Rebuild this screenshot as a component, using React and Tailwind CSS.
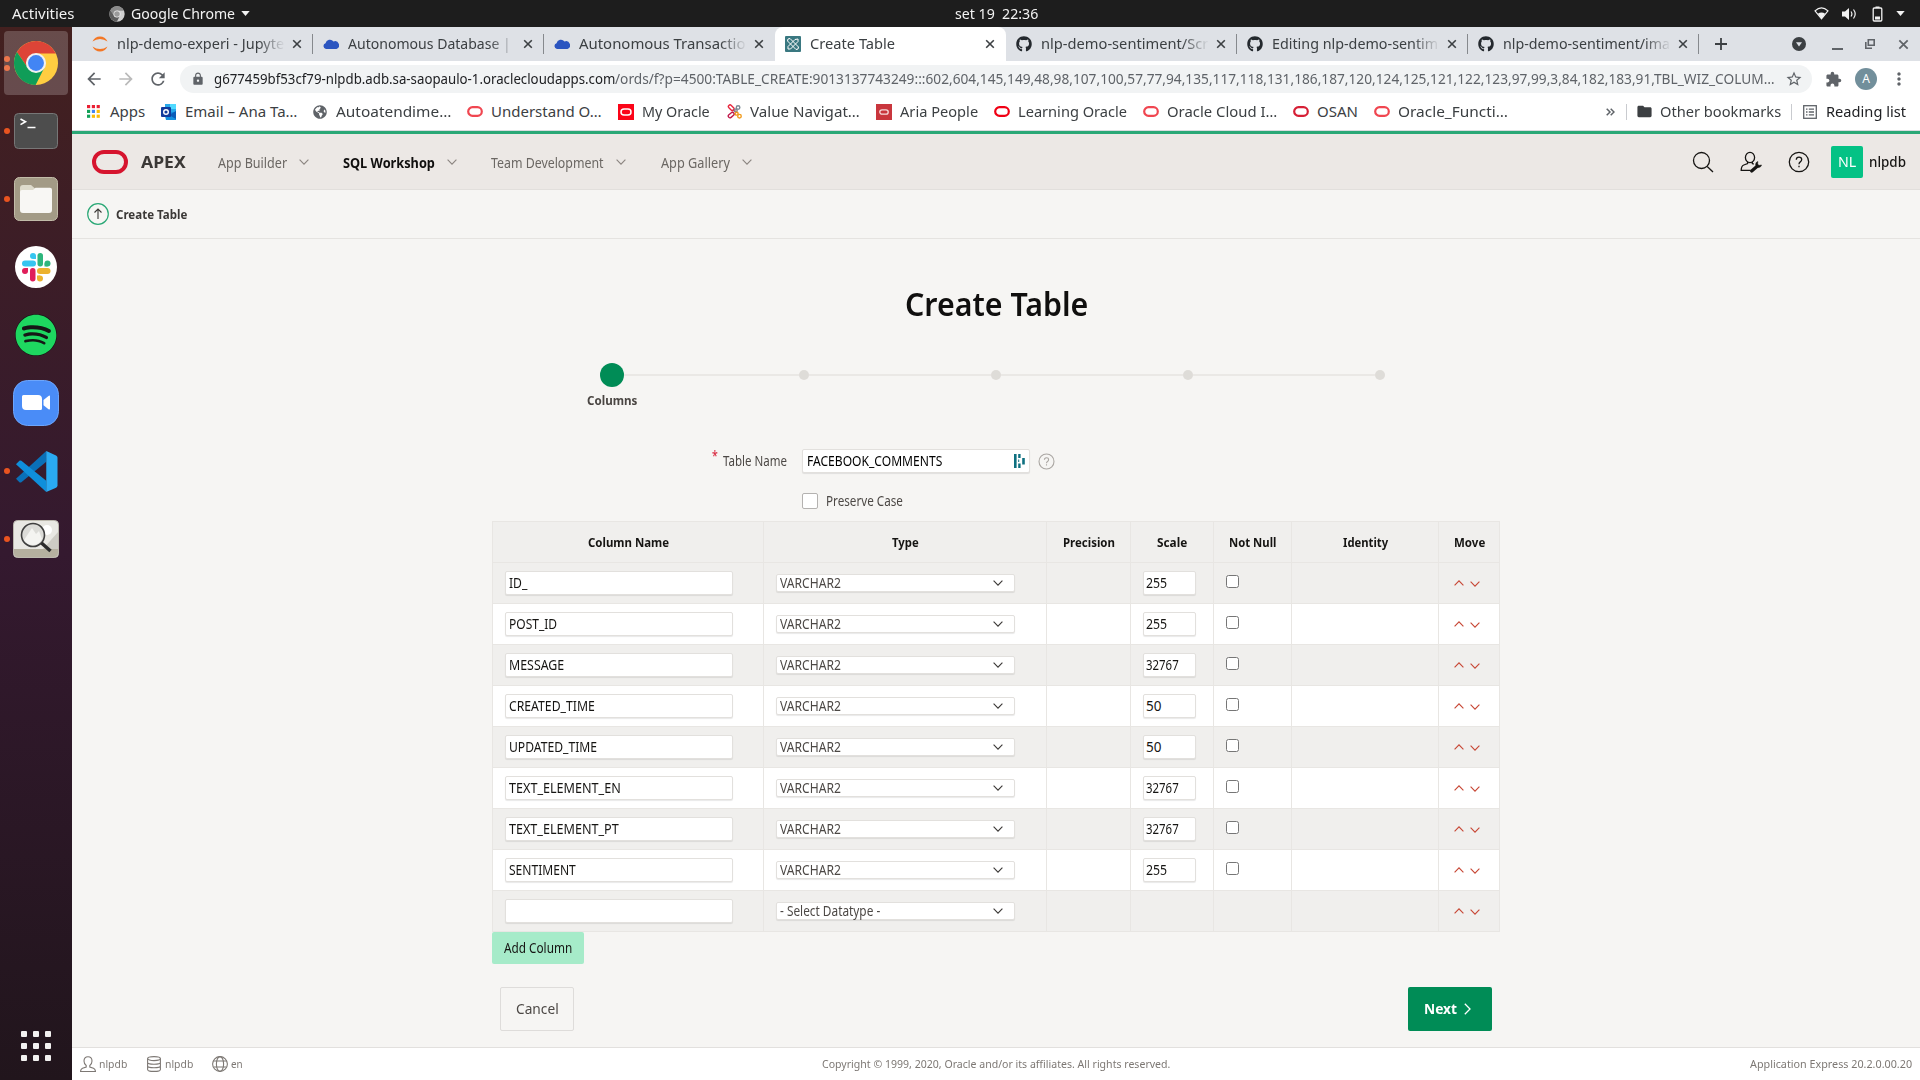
import React, { useLayoutEffect, useRef } from "react";
import { FaGithub, FaSpotify } from "react-icons/fa";
import { MdStarBorder, MdExtension, MdLock, MdRefresh, MdArrowBack, MdArrowForward, MdMoreVert, MdFolder } from "react-icons/md";
import { FaGlobeAmericas } from "react-icons/fa";

// Single line of text, condensed or widened so that it fills `w` pixels.
function Fit({ w, className = "", children }) {
  const outer = useRef(null);
  const inner = useRef(null);
  useLayoutEffect(() => {
    outer.current.style.width = w + "px";
    inner.current.style.transform = `scaleX(${w / inner.current.offsetWidth})`;
  });
  return (
    <span ref={outer} className={"inline-block shrink-0 text-left whitespace-pre " + className}>
      <span ref={inner} className="inline-block origin-left">{children}</span>
    </span>
  );
}

function ChromeLogo({ className, gray }) {
  const c = gray ? ["#8a8a8a", "#5c5c5c", "#d0d0d0", "#9a9a9a", "#eeeeee"] : ["#dd4437", "#109d58", "#ffcd41", "#4285f4", "#f1f1f1"];
  return (
    <svg viewBox="0 0 48 48" className={className}>
      <circle cx="24" cy="24" r="23" fill={c[2]} />
      <path d="M24 14h20.7A23 23 0 0 0 4.1 12.5L15.3 29z" fill={c[0]} />
      <path d="M4.1 12.5A23 23 0 0 0 23.6 47L32.7 29 24 34 15.3 29z" fill={c[1]} />
      <circle cx="24" cy="24" r="10.5" fill={c[4]} />
      <circle cx="24" cy="24" r="8.3" fill={c[3]} />
    </svg>
  );
}

function TopBar() {
  return (
    <div className="grid h-[27px] grid-cols-3 items-center bg-[#1d1d1d] text-[14.5px] text-[#f2f2f2]">
      <div className="flex items-center pl-3">
        <Fit w={62}>Activities</Fit>
        <ChromeLogo gray className="ml-[35px] size-4" />
        <Fit w={104} className="ml-[6px]">Google Chrome</Fit>
        <svg viewBox="0 0 10 6" className="ml-[6px] h-[5px] w-[9px]"><path d="M0 0h10L5 6z" fill="#f2f2f2" /></svg>
      </div>
      <div className="flex justify-center pl-[73px]"><Fit w={83}>set 19  22:36</Fit></div>
      <div className="flex items-center justify-end pr-[15px]">
        <svg viewBox="0 0 16 14" className="h-[13px] w-[15px]">
          <path d="M1 4.2Q8-2.2 15 4.2L8 12.8z" fill="none" stroke="#f2f2f2" strokeWidth="1.3" />
          <path d="M4 7.2Q8 4.6 12 7.2L8 12.6z" fill="#f2f2f2" />
        </svg>
        <svg viewBox="0 0 16 14" className="ml-[12px] h-[14px] w-[16px]">
          <path d="M1 4.5h3L8 1v12L4 9.500H1z" fill="#f2f2f2" />
          <path d="M10 4.500q1.800 2.500 0 5M12.500 2.500q3.400 4.500 0 9" fill="none" stroke="#f2f2f2" strokeWidth="1.200" />
        </svg>
        <svg viewBox="0 0 11 16" className="ml-[15px] h-4 w-[11px]">
          <rect x="1.200" y="2" width="8.600" height="13" rx="1" fill="none" stroke="#f2f2f2" strokeWidth="1.300" />
          <path d="M3.500.5h4V2h-4zM3 10.500h5V13.500H3z" fill="#f2f2f2" />
        </svg>
        <svg viewBox="0 0 10 6" className="ml-[13px] h-[5px] w-[9px]"><path d="M0 0h10L5 6z" fill="#f2f2f2" /></svg>
      </div>
    </div>
  );
}

const dockIcons = [
  { dots: 2, active: true, icon: <ChromeLogo className="size-[46px]" /> },
  {
    dots: 1,
    icon: (
      <svg viewBox="0 0 44 36" className="h-9 w-11">
        <rect x=".5" y=".5" width="43" height="35" rx="4" fill="#4d4d4d" stroke="#777" />
        <path d="M6.500 6l5 2.800-5 2.800M13.500 14.500h8" fill="none" stroke="#fff" strokeWidth="1.600" />
      </svg>
    ),
  },
  {
    dots: 1,
    icon: (
      <svg viewBox="0 0 44 44" className="size-11">
        <rect x=".5" y=".5" width="43" height="43" rx="5" fill="#a39b86" stroke="#c2bca9" />
        <path d="M6 11a3 3 0 0 1 3-3h8l4 3.500v6H6z" fill="#dedbcc" />
        <path d="M6 15q0-2 2-2h11l2.500-2.300H36q2 0 2 2V33q0 3-3 3H9q-3 0-3-3z" fill="#f8f7f4" />
      </svg>
    ),
  },
  {
    dots: 0,
    icon: (
      <svg viewBox="0 0 42 42" className="size-[42px]">
        <circle cx="21" cy="21" r="21" fill="#fff" />
        <g transform="translate(7 7)">
          <rect x="8" y="0" width="6" height="6" rx="3" fill="#36c5f0" />
          <path d="M11 3h3v3h-3z" fill="#36c5f0" />
          <rect x="0" y="7.500" width="14" height="6" rx="3" fill="#36c5f0" />
          <rect x="15.500" y="0" width="5.500" height="13.500" rx="2.700" fill="#2eb67d" />
          <rect x="22.500" y="7.500" width="6" height="6" rx="3" fill="#2eb67d" />
          <path d="M22.500 10.500h3v3h-3z" fill="#2eb67d" />
          <rect x="15" y="15" width="13.500" height="6" rx="3" fill="#ecb22e" />
          <rect x="15" y="22.500" width="6" height="6" rx="3" fill="#ecb22e" />
          <path d="M15 22.500h3v3h-3z" fill="#ecb22e" />
          <rect x="8" y="15" width="5.500" height="13.500" rx="2.700" fill="#e01e5a" />
          <rect x="0" y="15" width="6" height="6" rx="3" fill="#e01e5a" />
          <path d="M3 15h3v3H3z" fill="#e01e5a" />
        </g>
      </svg>
    ),
  },
  {
    dots: 0,
    icon: (
      <span className="rounded-full bg-[#161616]">
        <FaSpotify className="size-[42px] text-[#1ed760]" />
      </span>
    ),
  },
  {
    dots: 0,
    icon: (
      <svg viewBox="0 0 46 46" className="size-[46px]">
        <rect x=".5" y=".5" width="45" height="45" rx="14" fill="#4a8cf7" stroke="#6da5fb" />
        <path d="M9 16.500q0-1.500 1.500-1.500H25q4 0 4 4v9.500q0 1.500-1.500 1.500H13q-4 0-4-4zM30.500 20l5-4q1.500-1 1.500 .6v12q0 1.600-1.500.6l-5-4z" fill="#fff" />
      </svg>
    ),
  },
  {
    dots: 1,
    icon: (
      <svg viewBox="0 0 44 44" className="size-[43px]">
        <path d="M1 29.500l3.500 3.500q1 .7 2 0L32 12V1z" fill="#0a70b8" />
        <path d="M1 14.500L4.500 11q1-.7 2 0L32 31.500V43z" fill="#0f8fdb" />
        <path d="M32 1l10 4.500q1.500.7 1.500 2.500v28q0 1.800-1.500 2.500L32 43z" fill="#2aaaf2" />
      </svg>
    ),
  },
  {
    dots: 1,
    icon: (
      <svg viewBox="0 0 46 38" className="h-[38px] w-[46px]">
        <rect x=".5" y=".5" width="45" height="37" rx="4" fill="#e9e8e3" stroke="#bcb9ae" />
        <path d="M1 29h44v4q0 4-4 4H5q-4 0-4-4z" fill="#b5b09f" />
        <path d="M30 29L45 12v17z" fill="#cdcbc4" />
        <circle cx="34" cy="10" r="5" fill="#fff" />
        <circle cx="20" cy="15" r="11.500" fill="#dcdcd8" stroke="#3f3f3f" strokeWidth="1.600" />
        <path d="M11 20l8-12 4 6 3-3 3 8q-3 6-9 6-6 0-9-5z" fill="#f4f4f1" />
        <path d="M28.500 23l9 8" stroke="#2b2b2b" strokeWidth="3.500" />
      </svg>
    ),
  },
];

function Dock() {
  return (
    <aside className="flex w-[72px] shrink-0 flex-col bg-gradient-to-b from-[#43201f] via-[#34192f] to-[#21151c] pt-[2px]">
      {dockIcons.map((d, i) => (
        <div key={i} className="flex h-[68px] items-center">
          <div className="flex w-[14px] shrink-0 flex-col gap-[3px] pl-1">
            {Array.from({ length: d.dots }).map((_, k) => <i key={k} className="size-[6px] rounded-full bg-[#e95420]" />)}
          </div>
          <div className={d.active ? "-ml-[10px] flex size-16 items-center justify-center rounded bg-white/20" : "-ml-[10px] flex size-16 items-center justify-center"}>{d.icon}</div>
        </div>
      ))}
      <div className="mt-auto mb-[19px] ml-[21px] grid w-[30px] grid-cols-3 gap-[6px]">
        {Array.from({ length: 9 }).map((_, k) => <i key={k} className="size-[6px] rounded-[1px] bg-[#f2f1f0]" />)}
      </div>
    </aside>
  );
}

const Jupyter = () => (
  <svg viewBox="0 0 16 18" className="h-[18px] w-4" fill="#f37726">
    <path d="M.5 6.500Q3 1.500 8 1.500t7.500 5Q12 4 8 4T.5 6.500zM.5 11.500Q3 16.500 8 16.500t7.500-5Q12 14 8 14T.5 11.500z" />
  </svg>
);
const Cloud = () => (
  <svg viewBox="0 0 16 10" className="h-[10px] w-4 text-[#2b55c0]" fill="currentColor">
    <path d="M3 10A3 3 0 0 1 2.500 4.200 4.500 4.500 0 0 1 10.500 2.500 3.800 3.800 0 0 1 13.500 10z" />
  </svg>
);
const ApexFav = () => (
  <svg viewBox="0 0 16 16" className="size-4">
    <rect width="16" height="16" rx="1" fill="#3a7881" />
    <path d="M3 3l2-.5L13.500 11l-.5 2-2 .5L2.500 5zM13 3l-3 .5L3 10.500V13h2.500L13 5.500z" fill="none" stroke="#fff" strokeWidth="1" />
  </svg>
);

const tabs = [
  { t: "nlp-demo-experi - Jupyte", w: 167, icon: <Jupyter />, sep: true },
  { t: "Autonomous Database |", w: 163, icon: <Cloud />, sep: true },
  { t: "Autonomous Transactio", w: 166, icon: <Cloud /> },
  { t: "Create Table", w: 85, icon: <ApexFav />, active: true },
  { t: "nlp-demo-sentiment/Scr", w: 167, icon: <FaGithub className="size-4 text-[#24292e]" />, sep: true },
  { t: "Editing nlp-demo-sentim", w: 166, icon: <FaGithub className="size-4 text-[#24292e]" />, sep: true },
  { t: "nlp-demo-sentiment/ima", w: 167, icon: <FaGithub className="size-4 text-[#24292e]" />, sep: true },
];

const X = ({ className }) => (
  <svg viewBox="0 0 10 10" className={className}><path d="M1.200 1.200l7.600 7.600M8.800 1.200L1.200 8.800" stroke="currentColor" strokeWidth="1.600" /></svg>
);

function Tab({ tab }) {
  return (
    <div className={tab.active ? "relative flex h-[34px] w-[231px] items-center rounded-t-lg bg-white" : "relative flex h-[34px] w-[231px] items-center"}>
      <span className="ml-[10px] flex w-4 justify-center">{tab.icon}</span>
      <div className={tab.active ? "ml-[9px] w-[168px] pb-[2px] text-[#3c4043]" : "ml-[9px] w-[168px] pb-[2px] text-[#3c4043] [mask-image:linear-gradient(to_right,black_84%,transparent)]"}>
        <Fit w={tab.w}>{tab.t}</Fit>
      </div>
      <X className="ml-[7px] size-[10px] text-[#3c4043]" />
      {tab.sep && <i className="absolute top-[7px] right-0 h-5 w-px bg-[#86898d]" />}
    </div>
  );
}

function TabStrip() {
  return (
    <div className="flex h-[34px] items-center bg-[#dee1e6] pl-[10px] text-[15px]">
      {tabs.map((t) => <Tab key={t.t} tab={t} />)}
      <svg viewBox="0 0 12 12" className="ml-[16px] size-3"><path d="M6 0v12M0 6h12" stroke="#3c4043" strokeWidth="1.800" /></svg>
      <svg viewBox="0 0 14 14" className="ml-[65px] size-[14px]"><circle cx="7" cy="7" r="7" fill="#3c4043" /><path d="M4 5.300h6L7 9.500z" fill="#dee1e6" /></svg>
      <i className="mt-[9px] ml-[26px] h-[2px] w-[11px] bg-[#5f6368]" />
      <svg viewBox="0 0 10 10" className="ml-[22px] size-[10px]" fill="none" stroke="#5f6368" strokeWidth="1.600"><path d="M3.300.8h5.900v5.400H3.300zM.8 3v6.200H7" /></svg>
      <X className="ml-[23px] size-[11px] text-[#5f6368]" />
    </div>
  );
}

function Toolbar() {
  return (
    <div className="flex h-9 items-center bg-white">
      <MdArrowBack className="ml-[12px] size-5 text-[#5f6368]" />
      <MdArrowForward className="ml-3 size-5 text-[#bababa]" />
      <MdRefresh className="ml-3 size-5 text-[#5f6368]" />
      <div className="ml-3 flex h-7 w-[1632px] items-center rounded-full bg-[#f1f3f4] pl-[11px] text-[14px]">
        <MdLock className="size-[14px] text-[#5f6368]" />
        <Fit w={401} className="ml-[9px] pb-px text-[#202124]">g677459bf53cf79-nlpdb.adb.sa-saopaulo-1.oraclecloudapps.com</Fit>
        <Fit w={1160} className="pb-px text-[#5f6368]">/ords/f?p=4500:TABLE_CREATE:9013137743249:::602,604,145,149,48,98,107,100,57,77,94,135,117,118,131,186,187,120,124,125,121,122,123,97,99,3,84,182,183,91,TBL_WIZ_COLUM…</Fit>
        <MdStarBorder className="ml-[10px] size-[18px] text-[#5f6368]" />
      </div>
      <MdExtension className="ml-[13px] size-[17px] text-[#5f6368]" />
      <span className="ml-[13px] flex size-[22px] items-center justify-center rounded-full bg-[#728f9b] text-[12px] text-white">A</span>
      <MdMoreVert className="ml-3 size-5 text-[#5f6368]" />
    </div>
  );
}

const OPill = ({ className = "text-[#f04650]" }) => (
  <svg viewBox="0 0 16 11" className={"h-[11px] w-4 " + className}><rect x="1.200" y="1.200" width="13.600" height="8.600" rx="4.300" fill="none" stroke="currentColor" strokeWidth="2.200" /></svg>
);
const OBox = ({ className }) => (
  <span className={"flex size-4 items-center justify-center text-white " + className}>
    <svg viewBox="0 0 12 8" className="h-[8px] w-3"><rect x="1" y="1" width="10" height="6" rx="3" fill="none" stroke="currentColor" strokeWidth="1.500" /></svg>
  </span>
);
// Darker variant with a smaller mark.
const OBoxSmall = () => (
  <span className="flex size-4 items-center justify-center bg-[#c9363d]">
    <svg viewBox="0 0 10 6" className="h-[6px] w-[10px]"><rect x=".8" y=".8" width="8.400" height="4.400" rx="2.200" fill="none" stroke="#f6dcdc" strokeWidth="1.300" /></svg>
  </span>
);
const AppsGrid = () => (
  <svg viewBox="0 0 14 14" className="h-[13px] w-[13px]">
    {["#ea1f33", "#ea1f33", "#ea1f33", "#12a158", "#4285f4", "#fbbc05", "#12a158", "#fbbc05", "#fbbc05"].map((c, i) => (
      <rect key={i} x={(i % 3) * 5.2} y={Math.floor(i / 3) * 5.2} width="3.400" height="3.400" fill={c} />
    ))}
  </svg>
);
const Outlook = () => (
  <svg viewBox="0 0 16 16" className="size-4">
    <path d="M4 0h11v10H4z" fill="#28a8ea" /><path d="M9 0h6v5H9z" fill="#50d9ff" /><path d="M3 8l12 0v8H5z" fill="#1490df" /><path d="M15 7v8l-7-4z" fill="#0a5cb8" />
    <rect y="3" width="10" height="10" rx="1" fill="#123b9c" /><circle cx="5" cy="8" r="2.300" fill="none" stroke="#fff" strokeWidth="1.400" />
  </svg>
);
const ValueNav = () => (
  <svg viewBox="0 0 16 16" className="size-[15px]" fill="none" strokeWidth="1.500">
    <path d="M11.500 9.500L6 6" stroke="#e0243a" strokeWidth="1.800" />
    <rect x="1" y="2.200" width="7" height="3.600" rx="1.800" transform="rotate(45 4.500 4)" stroke="#e8283f" />
    <circle cx="11.800" cy="3.800" r="1.900" stroke="#7c8a94" />
    <circle cx="9.300" cy="6.800" r="1.500" stroke="#7c8a94" />
    <rect x="1" y="10" width="7" height="3.600" rx="1.800" transform="rotate(-40 4.500 11.800)" stroke="#c01a4c" />
    <circle cx="10.300" cy="10.300" r="1.600" stroke="#f19c1f" />
    <circle cx="13.300" cy="13" r="1.900" stroke="#f19c1f" />
  </svg>
);

const bookmarks = [
  { t: "Apps", w: 35, icon: <AppsGrid />, m: "ml-[15px]", g: "ml-[10px]" },
  { t: "Email – Ana Ta…", w: 112, icon: <Outlook /> },
  { t: "Autoatendime…", w: 115, icon: <FaGlobeAmericas className="size-[14px] text-[#5f6368]" />, m: "ml-[16px]", g: "ml-[9px]" },
  { t: "Understand O…", w: 111, icon: <OPill />, m: "ml-[16px]" },
  { t: "My Oracle", w: 68, icon: <OBox className="bg-[#fb0418]" /> },
  { t: "Value Navigat…", w: 110, icon: <ValueNav />, m: "ml-[17px]" },
  { t: "Aria People", w: 78, icon: <OBoxSmall /> },
  { t: "Learning Oracle", w: 109, icon: <OPill className="text-[#f00014]" /> },
  { t: "Oracle Cloud I…", w: 110, icon: <OPill /> },
  { t: "OSAN", w: 41, icon: <OPill className="text-[#d61f35]" /> },
  { t: "Oracle_Functi…", w: 110, icon: <OPill /> },
];

function Bookmarks() {
  return (
    <div className="flex h-[34px] items-center border-b border-[#dadce0] bg-white pb-1 text-[15px] text-[#3c4043]">
      {bookmarks.map((b) => (
        <div key={b.t} className={"flex items-center " + (b.m || "ml-4")}>
          {b.icon}
          <Fit w={b.w} className={b.g || "ml-2"}>{b.t}</Fit>
        </div>
      ))}
      <div className="mr-[14px] ml-auto flex items-center">
        <svg viewBox="0 0 9 8" className="mr-[11px] h-2 w-[9px]" fill="none" stroke="#5f6368" strokeWidth="1.500"><path d="M.7.7L4 4 .7 7.300M4.700.7L8 4 4.700 7.300" /></svg>
        <i className="h-4 w-px bg-[#c9cbcf]" />
        <MdFolder className="ml-[9px] size-[17px] text-[#3c3f42]" />
        <Fit w={121} className="ml-[7px]">Other bookmarks</Fit>
        <i className="ml-[10px] h-4 w-px bg-[#c9cbcf]" />
        <svg viewBox="0 0 14 14" className="ml-[11px] size-[14px]" fill="none" stroke="#5f6368"><rect x=".7" y=".7" width="12.600" height="12.600" strokeWidth="1.300" /><path d="M3 4.200h1.500M3 7h1.500M3 9.800h1.500M5.800 4.200H11M5.800 7H11M5.800 9.800H11" strokeWidth="1.300" /></svg>
        <Fit w={80} className="ml-[9px] text-[#202124]">Reading list</Fit>
      </div>
    </div>
  );
}

const Chev = ({ d = "down", className }) => (
  <svg viewBox="0 0 10 6" className={className} fill="none" stroke="currentColor" strokeWidth="1.100">
    <path d={d === "down" ? "M.6.6L5 5.200 9.400.6" : "M.6 5.400L5 .8l4.400 4.600"} />
  </svg>
);

const nav = [
  { t: "App Builder", w: 69, m: "ml-8" },
  { t: "SQL Workshop", w: 92, m: "ml-[34px]", on: true },
  { t: "Team Development", w: 113, m: "ml-[34px]" },
  { t: "App Gallery", w: 69, m: "ml-[35px]" },
];

function ApexHeader() {
  return (
    <header className="flex h-[59px] items-center border-t-[3px] border-b border-t-[#2aa876] border-b-[#e2dfdc] bg-[#ece8e5]">
      <span className="ml-[20px] h-6 w-9 rounded-[12px] border-[4px] border-[#d6142e]" />
      <Fit w={45} className="ml-[13px] text-[16px] font-bold text-[#3b3836]">APEX</Fit>
      {nav.map((n) => (
        <div key={n.t} className={"flex items-center " + n.m}>
          <Fit w={n.w} className={n.on ? "pt-px text-[14px] font-bold text-[#100f0e]" : "pt-px text-[14px] text-[#6b6763]"}>{n.t}</Fit>
          <Chev className="ml-3 h-[6px] w-[10px] text-[#8b8580]" />
        </div>
      ))}
      <div className="mr-[14px] ml-auto flex items-center text-[#161513]">
        <svg viewBox="0 0 22 22" className="size-[22px]" fill="none" stroke="currentColor" strokeWidth="1.300"><circle cx="9.500" cy="9.500" r="8" /><path d="M15.200 15.500l5.800 5.500" /></svg>
        <svg viewBox="0 0 22 22" className="ml-[26px] size-[22px]" fill="none" stroke="currentColor" strokeWidth="1.300">
          <ellipse cx="10" cy="6.500" rx="4.600" ry="5.200" />
          <path d="M7.600 11v1.600L3.800 14Q1.300 15 1.200 19.300h9.300M12.300 11v1.600l1.500.6" />
          <path d="M11.700 20l5.500-4.800" strokeWidth="3.200" strokeLinecap="round" />
          <path d="M17.800 10.500q-2.300.8-2.200 3.300.5 2.800 3.200 2.700 2.200-.3 2.700-2.500l-2.600.5-1.300-1.500z" fill="currentColor" strokeWidth=".6" />
        </svg>
        <svg viewBox="0 0 22 22" className="ml-[26px] size-[22px]" fill="none" stroke="currentColor" strokeWidth="1.300"><circle cx="11" cy="11" r="9.700" /><path d="M8.300 8.800q0-2.700 2.700-2.700t2.700 2.500q0 1.400-1.400 2.300-1.300.8-1.300 2.300M11 14.700v1.500" /></svg>
        <span className="ml-[21px] flex size-8 items-center justify-center rounded-[2px] bg-[#04c285] text-white"><Fit w={18} className="text-[15px]">NL</Fit></span>
        <Fit w={37} className="ml-[6px] text-[14.500px] font-medium">nlpdb</Fit>
      </div>
    </header>
  );
}

function Steps() {
  return (
    <div className="mt-[41px] flex flex-col">
      <div className="ml-[108px] flex h-6 items-center self-start">
        <span className="size-6 rounded-full bg-[#008c56]" />
        <i className="h-[2px] w-[175px] bg-[#eae8e5]" />
        <span className="size-[10px] rounded-full bg-[#dedcd8]" />
        {[1, 2, 3].map((k) => (
          <React.Fragment key={k}>
            <i className="h-[2px] w-[182px] bg-[#eae8e5]" />
            <span className="size-[10px] rounded-full bg-[#dedcd8]" />
          </React.Fragment>
        ))}
      </div>
      <Fit w={50} className="mt-[4px] mb-px ml-[95px] self-start text-[13px] leading-[18px] font-bold text-[#4a4643]">Columns</Fit>
    </div>
  );
}

const box = "rounded-[2px] border border-[#e2e0dd] bg-white shadow-[0_1px_1px_rgba(0,0,0,0.09)]";

const rows = [
  ["ID_", 18, "255", 21],
  ["POST_ID", 48, "255", 21],
  ["MESSAGE", 55, "32767", 33],
  ["CREATED_TIME", 86, "50", 15],
  ["UPDATED_TIME", 88, "50", 15],
  ["TEXT_ELEMENT_EN", 112, "32767", 33],
  ["TEXT_ELEMENT_PT", 110, "32767", 33],
  ["SENTIMENT", 67, "255", 21],
  ["", 0, "", 0],
];
const heads = [["Column Name", 81], ["Type", 27], ["Precision", 52], ["Scale", 30], ["Not Null", 47], ["Identity", 45], ["Move", 31]];
const grid = "grid h-[41px] grid-cols-[271px_283px_84px_83px_78px_147px_61px] ";
const cell = "flex h-full items-center border-r border-b border-[#e8e6e3] ";

function ColumnsTable() {
  return (
    <div className="w-[1008px] border-t border-l border-[#e8e6e3] text-[13.500px] text-[#161513]">
      <div className={grid + "bg-[#f0efed]"}>
        {heads.map(([h, w]) => (
          <div key={h} className={cell + "justify-center"}><Fit w={w} className="pt-px text-[13px] font-bold">{h}</Fit></div>
        ))}
      </div>
      {rows.map(([name, w, scale, sw], i) => (
        <div key={i} className={grid + (i % 2 ? "bg-white" : "bg-[#f0efed]")}>
          <div className={cell + "pl-3"}>
            <div className={"flex h-6 w-[228px] items-center pl-[3px] " + box}>{name && <Fit w={w} className="pt-px">{name}</Fit>}</div>
          </div>
          <div className={cell + "pl-3"}>
            <div className={"flex h-[18px] w-[239px] items-center justify-between pr-[11px] pl-[3px] text-[#4c4845] " + box}>
              <Fit w={name ? 61 : 100} className="pt-px">{name ? "VARCHAR2" : "- Select Datatype -"}</Fit>
              <Chev className="h-[6px] w-[10px] text-[#3b3836]" />
            </div>
          </div>
          <div className={cell} />
          <div className={cell + "pl-3"}>{name && <div className={"flex h-6 w-[53px] items-center pl-[2px] " + box}><Fit w={sw} className="pt-px">{scale}</Fit></div>}</div>
          <div className={cell + "pb-[3px] pl-3"}>{name && <input type="checkbox" className="size-[13px]" />}</div>
          <div className={cell} />
          <div className={cell + "gap-[6px] pl-[15px] text-[#c74634]"}>
            <Chev d="up" className="h-[6px] w-[10px]" />
            <Chev className="mt-px h-[6px] w-[10px]" />
          </div>
        </div>
      ))}
    </div>
  );
}

function Main() {
  return (
    <main className="flex flex-1 flex-col items-center bg-[#f6f5f3]">
      <div className="mt-[42px] h-[41px]"><Fit w={183} className="text-[32px] leading-[46px] font-semibold text-[#100f0e]">Create Table</Fit></div>
      <div className="w-[1008px]">
        <Steps />
        <div className="mt-[39px] flex h-6 items-center">
          <Fit w={6} className="-mt-3 ml-[220px] text-[14px] text-[#d6142e]">*</Fit>
          <Fit w={64} className="ml-[5px] pt-px text-[13.500px] text-[#4c4845]">Table Name</Fit>
          <div className={"ml-[15px] flex h-6 w-[228px] items-center justify-between pr-1 pl-1 text-[13.500px] " + box}>
            <Fit w={135} className="pt-px">FACEBOOK_COMMENTS</Fit>
            <svg viewBox="0 0 11 14" className="h-[14px] w-[11px]" fill="#0e7080"><path d="M0 0h2.600v14H0zM4.200 0h2.400v4H4.200zM4.200 9.500h2.400v4.500H4.200zM8.200 4h2.600v6.500H8.200zM4.200 5.500h1v2.500h-1z" /></svg>
          </div>
          <svg viewBox="0 0 22 22" className="ml-[8px] size-[17px]" fill="none" stroke="#aaa6a2" strokeWidth="1.400"><circle cx="11" cy="11" r="9.700" /><path d="M8.300 8.800q0-2.700 2.700-2.700t2.700 2.500q0 1.400-1.400 2.300-1.300.8-1.300 2.300M11 14.700v1.500" /></svg>
        </div>
        <div className="mt-5 ml-[310px] flex h-4 items-center text-[13.500px] text-[#4c4845]">
          <i className="size-4 rounded-[2px] border border-[#b4b2b0] bg-white" />
          <Fit w={77} className="ml-2 pt-px">Preserve Case</Fit>
        </div>
        <div className="mt-3"><ColumnsTable /></div>
        <button className="flex h-8 w-[92px] items-center justify-center rounded-[2px] bg-[#a6ebc9] text-[#161513]"><Fit w={68} className="pt-px text-[13.500px]">Add Column</Fit></button>
        <div className="mt-[23px] flex justify-between px-2">
          <button className="flex h-11 w-[74px] items-center justify-center rounded-[2px] border border-[#dedcda] text-[#4c4845]"><Fit w={43} className="pb-[2px] text-[15px]">Cancel</Fit></button>
          <button className="flex h-11 w-[84px] items-center rounded-[2px] bg-[#008c56] pl-4 text-white">
            <Fit w={33} className="pb-[2px] text-[15px] font-bold">Next</Fit>
            <svg viewBox="0 0 7 12" className="ml-[7px] h-3 w-[7px]" fill="none" stroke="currentColor" strokeWidth="1.300"><path d="M.8.8L6 6 .8 11.200" /></svg>
          </button>
        </div>
      </div>
    </main>
  );
}

function Footer() {
  return (
    <footer className="grid h-[33px] grid-cols-3 items-center border-t border-[#e2e0de] bg-white text-[11.500px] text-[#7d7874]">
      <div className="flex items-center pl-2">
        <svg viewBox="0 0 16 16" className="size-4" fill="none" stroke="currentColor" strokeWidth="1.100"><path d="M8 .8c2.600 0 4 1.700 4 4.200 0 2.300-1 3.700-2.200 4.500v1.500l3.700 1.300q1.800.8 2 3.200H.5q.2-2.400 2-3.200L6.200 11V9.500C5 8.700 4 7.300 4 5 4 2.500 5.400.8 8 .8z" /></svg>
        <Fit w={28} className="ml-[3px]">nlpdb</Fit>
        <svg viewBox="0 0 14 16" className="ml-5 h-4 w-[14px]" fill="none" stroke="currentColor" strokeWidth="1.100"><ellipse cx="7" cy="2.600" rx="6.400" ry="2" /><path d="M.6 2.600v10.800c0 1.200 2.900 2 6.400 2s6.400-.8 6.400-2V2.600M.6 6.200c0 1.200 2.900 2 6.400 2s6.400-.8 6.400-2M.6 9.800c0 1.200 2.900 2 6.400 2s6.400-.8 6.400-2" /></svg>
        <Fit w={28} className="ml-1">nlpdb</Fit>
        <svg viewBox="0 0 16 16" className="ml-[19px] size-4" fill="none" stroke="currentColor" strokeWidth="1.100"><circle cx="8" cy="8" r="7.400" /><ellipse cx="8" cy="8" rx="3.600" ry="7.400" /><path d="M1.500 5h13M1.500 11h13" /></svg>
        <Fit w={12} className="ml-[3px]">en</Fit>
      </div>
      <div className="flex justify-center"><Fit w={348}>Copyright © 1999, 2020, Oracle and/or its affiliates. All rights reserved.</Fit></div>
      <div className="flex justify-end pr-2"><Fit w={162}>Application Express 20.2.0.00.20</Fit></div>
    </footer>
  );
}

export default function App() {
  return (
    <div className="flex h-[1080px] w-[1920px] flex-col overflow-hidden font-['Noto_Sans',sans-serif]">
      <TopBar />
      <div className="flex flex-1">
        <Dock />
        <div className="flex w-[1848px] flex-col">
          <TabStrip />
          <Toolbar />
          <Bookmarks />
          <ApexHeader />
          <div className="flex h-[49px] items-center border-b border-[#e5e3e0] bg-[#f6f5f3] pl-[15px]">
            <svg viewBox="0 0 22 22" className="size-[22px]" fill="none"><circle cx="11" cy="11" r="10.300" stroke="#2aa876" strokeWidth="1.200" /><path d="M11 16V6.200M7.500 9.500L11 6l3.500 3.500" stroke="#3b3836" strokeWidth="1.100" /></svg>
            <Fit w={71} className="ml-[7px] pt-[2px] text-[13px] font-bold text-[#3b3836]">Create Table</Fit>
          </div>
          <Main />
          <Footer />
        </div>
      </div>
    </div>
  );
}
